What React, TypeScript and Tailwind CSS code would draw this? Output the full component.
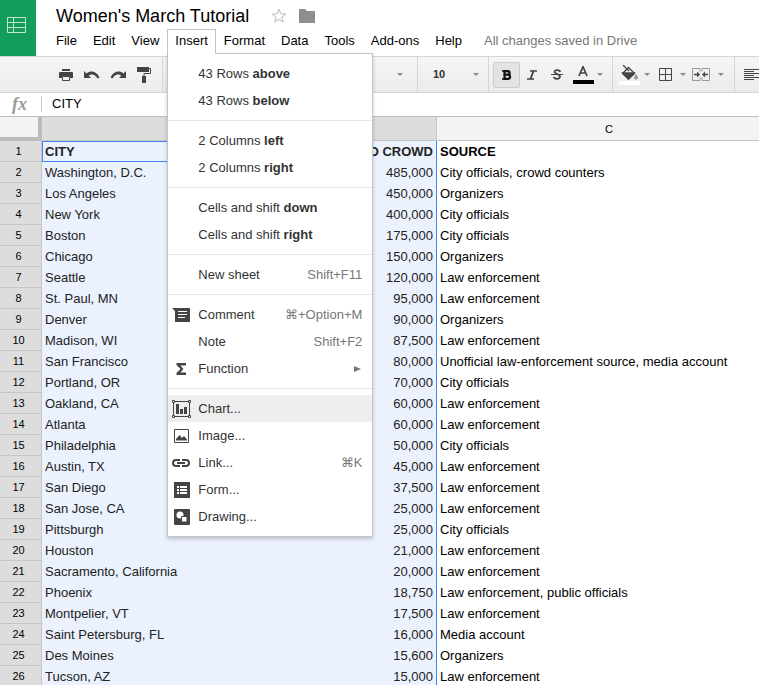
import type { ReactNode } from "react";

type Row = [string, string, string];

const rows: Row[] = [
  ["Washington, D.C.", "485,000", "City officials, crowd counters"],
  ["Los Angeles", "450,000", "Organizers"],
  ["New York", "400,000", "City officials"],
  ["Boston", "175,000", "City officials"],
  ["Chicago", "150,000", "Organizers"],
  ["Seattle", "120,000", "Law enforcement"],
  ["St. Paul, MN", "95,000", "Law enforcement"],
  ["Denver", "90,000", "Organizers"],
  ["Madison, WI", "87,500", "Law enforcement"],
  ["San Francisco", "80,000", "Unofficial law-enforcement source, media account"],
  ["Portland, OR", "70,000", "City officials"],
  ["Oakland, CA", "60,000", "Law enforcement"],
  ["Atlanta", "60,000", "Law enforcement"],
  ["Philadelphia", "50,000", "City officials"],
  ["Austin, TX", "45,000", "Law enforcement"],
  ["San Diego", "37,500", "Law enforcement"],
  ["San Jose, CA", "25,000", "Law enforcement"],
  ["Pittsburgh", "25,000", "City officials"],
  ["Houston", "21,000", "Law enforcement"],
  ["Sacramento, California", "20,000", "Law enforcement"],
  ["Phoenix", "18,750", "Law enforcement, public officials"],
  ["Montpelier, VT", "17,500", "Law enforcement"],
  ["Saint Petersburg, FL", "16,000", "Media account"],
  ["Des Moines", "15,600", "Organizers"],
  ["Tucson, AZ", "15,000", "Law enforcement"],
];

function Arrow() {
  return (
    <svg width="6" height="3" viewBox="0 0 6 3" className="shrink-0" aria-hidden="true">
      <path d="M0 0h6L3 3z" fill="#8a8a8a" />
    </svg>
  );
}

function Tool({ label, className = "w-[26px]", children }: { label: string; className?: string; children: ReactNode }) {
  return (
    <button type="button" aria-label={label} className={`flex h-[26px] shrink-0 items-center justify-center ${className}`}>
      {children}
    </button>
  );
}

function MenuItem({ label, strong, shortcut, icon, active = false, submenu = false }: {
  label: string;
  strong?: string;
  shortcut?: string;
  icon?: ReactNode;
  active?: boolean;
  submenu?: boolean;
}) {
  return (
    <button
      type="button"
      role="menuitem"
      className={`flex h-[27px] w-full items-center pr-[10px] text-left text-[#333] ${active ? "bg-[#eee]" : ""}`}
    >
      <span className="flex w-[30px] shrink-0 justify-start pl-1">{icon}</span>
      <span className="grow whitespace-nowrap">
        {label}
        {strong && <b> {strong}</b>}
      </span>
      {shortcut && <span className="whitespace-nowrap text-[#777]">{shortcut}</span>}
      {submenu && (
        <svg width="8" height="8" viewBox="0 0 8 8" aria-hidden="true">
          <path d="M0 1l7 3-7 3z" fill="#777" />
        </svg>
      )}
    </button>
  );
}

function Separator() {
  return <hr className="my-[6px] border-t border-[#e5e5e5]" />;
}

const commentIcon = (
  <svg width="20" height="16" viewBox="0 0 20 16" aria-hidden="true">
    <path d="M0 1h18v14H3V4z" fill="#444" />
    <path d="M6 4.500h9M6 7.500h9M6 10.500h7" stroke="#fff" />
  </svg>
);
const sigmaIcon = (
  <svg width="20" height="14" viewBox="0 0 20 14" aria-hidden="true">
    <path d="M4.500 1H14v2.500H8.400L11.500 7l-3.100 3.500H14V13H4.500v-2l4-4-4-4z" fill="#444" />
  </svg>
);
const chartIcon = (
  <svg width="20" height="18" viewBox="0 0 20 18" aria-hidden="true">
    <path d="M2.500 1.500h14M2.500 16.500h14M1.500 2v14M17.500 2v14" stroke="#444" />
    <path d="M.5.5h2v2h-2zM16.500.5h2v2h-2zM.5 15.500h2v2h-2zM16.500 15.500h2v2h-2z" fill="#eee" stroke="#444" />
    <path d="M4 4h3v10H4zM8 9h3v5H8zM12 7h3v7h-3z" fill="#444" />
  </svg>
);
const imageIcon = (
  <svg width="20" height="14" viewBox="0 0 20 14" aria-hidden="true">
    <path d="M2.500.5h14v13h-14z" fill="none" stroke="#444" />
    <path d="M4 11.500V10l3.500-4 2.500 3 2-2 3 3.500v1z" fill="#444" />
  </svg>
);
const linkIcon = (
  <svg width="20" height="8" viewBox="0 0 20 8" aria-hidden="true">
    <path d="M8 1H4a3 3 0 0 0 0 6h4M10 1h4a3 3 0 0 1 0 6h-4M5 4h8" fill="none" stroke="#444" strokeWidth="2" />
  </svg>
);
const formIcon = (
  <svg width="20" height="16" viewBox="0 0 20 16" aria-hidden="true">
    <path d="M2 0h16v16H2z" fill="#444" />
    <path d="M5 5h2M8 5h7M5 8h2M8 8h7M5 11h2M8 11h7" stroke="#fff" strokeWidth="2" />
  </svg>
);
const drawingIcon = (
  <svg width="20" height="16" viewBox="0 0 20 16" aria-hidden="true">
    <rect x="2" width="16" height="16" rx="1" fill="#444" />
    <circle cx="8" cy="6" r="3.500" fill="#fff" />
    <path d="M9.500 7.500H15V13H9.500z" fill="#fff" stroke="#444" />
  </svg>
);

function InsertMenu() {
  return (
    <div role="menu" className="absolute top-[24px] left-0 z-10 w-[206px] border border-[#c4c4c4] bg-white py-[6px] shadow-[0_2px_4px_rgba(0,0,0,0.2)]">
      <MenuItem label="43 Rows" strong="above" />
      <MenuItem label="43 Rows" strong="below" />
      <Separator />
      <MenuItem label="2 Columns" strong="left" />
      <MenuItem label="2 Columns" strong="right" />
      <Separator />
      <MenuItem label="Cells and shift" strong="down" />
      <MenuItem label="Cells and shift" strong="right" />
      <Separator />
      <MenuItem label="New sheet" shortcut="Shift+F11" />
      <Separator />
      <MenuItem label="Comment" shortcut="⌘+Option+M" icon={commentIcon} />
      <MenuItem label="Note" shortcut="Shift+F2" />
      <MenuItem label="Function" icon={sigmaIcon} submenu />
      <Separator />
      <MenuItem label="Chart..." icon={chartIcon} active />
      <MenuItem label="Image..." icon={imageIcon} />
      <MenuItem label="Link..." shortcut="⌘K" icon={linkIcon} />
      <MenuItem label="Form..." icon={formIcon} />
      <MenuItem label="Drawing..." icon={drawingIcon} />
    </div>
  );
}

function Header() {
  return (
    <header className="flex h-14">
      <a href="#home" aria-label="Sheets home" className="flex w-9 shrink-0 justify-center bg-[#129e5a] pt-[17px] pr-[3px]">
        <svg width="19" height="16" viewBox="0 0 19 16" aria-hidden="true">
          <path d="M.5.5h18v15H.5zM.5 5.500h18M.5 10.500h18M6.500.5v15" fill="none" stroke="#c4e7d5" />
        </svg>
      </a>
      <div className="flex min-w-0 grow flex-col pl-3">
        <div className="flex h-[29px] items-center pt-[3px] pl-2">
          <h1 className="whitespace-nowrap text-[18px] leading-6">Women's March Tutorial</h1>
          <button type="button" aria-label="Star" className="ml-[22px]">
            <svg width="16" height="16" viewBox="0 0 16 16" aria-hidden="true">
              <path d="M8 1.200l1.800 4.600 5 .3-3.900 3.100 1.300 4.900L8 11.400l-4.200 2.700 1.300-4.900L1.200 6.100l5-.3z" fill="none" stroke="#bbb" />
            </svg>
          </button>
          <button type="button" aria-label="Move to folder" className="ml-3">
            <svg width="16" height="14" viewBox="0 0 16 14" aria-hidden="true">
              <path d="M0 0h6l2 2h8v12H0z" fill="#8e8e8e" />
            </svg>
          </button>
        </div>
        <nav className="flex h-[27px] whitespace-nowrap leading-6">
          <button type="button" className="h-6 px-2">File</button>
          <button type="button" className="h-6 px-2">Edit</button>
          <button type="button" className="h-6 px-2">View</button>
          <div className="relative">
            <button type="button" aria-expanded="true" className="relative z-20 flex h-[25px] items-start border border-b-0 border-[#c4c4c4] bg-white px-[7px] leading-[22px]">
              Insert
            </button>
            <InsertMenu />
          </div>
          <button type="button" className="h-6 px-2">Format</button>
          <button type="button" className="h-6 px-2">Data</button>
          <button type="button" className="h-6 px-2">Tools</button>
          <button type="button" className="h-6 px-2">Add-ons</button>
          <button type="button" className="h-6 px-2">Help</button>
          <span className="ml-[14px] text-[#777]">All changes saved in Drive</span>
        </nav>
      </div>
    </header>
  );
}

function Toolbar() {
  return (
    <div role="toolbar" className="flex h-[37px] items-stretch overflow-hidden border-y border-[#d5d5d5] bg-linear-to-b from-[#f6f6f6] to-[#ebebeb] text-[#444]">
      <div className="flex w-[163px] shrink-0 items-center border-r border-[#d5d5d5] pl-[53px]">
        <Tool label="Print">
          <svg width="14" height="12" viewBox="0 0 14 12" aria-hidden="true">
            <path d="M3 0h8v2H3zM1 3h12a1 1 0 0 1 1 1v5h-3V7H3v2H0V4a1 1 0 0 1 1-1z" fill="#444" />
            <path d="M3.500 7.500h7v4h-7z" fill="#f1f1f1" stroke="#444" />
          </svg>
        </Tool>
        <Tool label="Undo">
          <svg width="16" height="10" viewBox="0 0 16 10" aria-hidden="true">
            <path d="M0 1v7h7L4.800 5.800C7 3.800 11 3.600 13.500 8.500l2-1C12.500 1 6.500.2 2.500 3.500z" fill="#444" />
          </svg>
        </Tool>
        <Tool label="Redo">
          <svg width="16" height="10" viewBox="0 0 16 10" aria-hidden="true">
            <path d="M16 1v7H9l2.200-2.200C9 3.800 5 3.600 2.500 8.500l-2-1C3.500 1 9.500.2 13.500 3.500z" fill="#444" />
          </svg>
        </Tool>
        <Tool label="Paint format">
          <svg width="14" height="16" viewBox="0 0 14 16" aria-hidden="true">
            <path d="M0 0h12v5H0zM5 9h4v7H5z" fill="#444" />
            <path d="M12 1.500h1.500v5H7V10" fill="none" stroke="#444" />
          </svg>
        </Tool>
      </div>
      <div className="flex w-[255px] shrink-0 items-center justify-end border-r border-[#d5d5d5] pr-1">
        <Tool label="Font">
          <Arrow />
        </Tool>
      </div>
      <label className="flex w-[71px] shrink-0 items-center border-r border-[#d5d5d5] pr-[9px] pl-[15px]">
        <select aria-label="Font size" defaultValue="10" className="grow appearance-none bg-transparent text-[11px] font-bold text-[#333]">
          <option>10</option>
        </select>
        <Arrow />
      </label>
      <div className="flex w-[124px] shrink-0 items-center border-r border-[#d5d5d5] pl-1">
        <Tool label="Bold" className="w-[27px] rounded-xs border border-[#ccc] bg-[#e3e3e3]">
          <svg width="10" height="10" viewBox="0 0 10 10" aria-hidden="true">
            <path d="M0 1h6M0 9h6" stroke="#111" strokeWidth="1.500" />
            <path d="M2.500 1.200h3.300a1.700 1.700 0 0 1 0 3.500H3h3a2 2 0 0 1 0 4.100H2.500z" fill="none" stroke="#111" strokeWidth="2.200" />
          </svg>
        </Tool>
        <Tool label="Italic" className="w-6">
          <svg width="10" height="10" viewBox="0 0 10 10" aria-hidden="true">
            <path d="M3 1h7M0 9h7" stroke="#444" strokeWidth="1.500" />
            <path d="M6.500 1l-3 8" stroke="#444" strokeWidth="2" />
          </svg>
        </Tool>
        <Tool label="Strikethrough">
          <svg width="12" height="11" viewBox="0 0 12 11" aria-hidden="true">
            <path d="M9 3C9 .6 3.500.4 3.500 3c0 1.600 5.500 2.200 5.500 4.800 0 2.700-6 2.700-6-.1" fill="none" stroke="#444" strokeWidth="1.800" />
            <path d="M0 5.500h12" stroke="#444" />
          </svg>
        </Tool>
        <Tool label="Text color" className="w-[34px] gap-[3px] pl-[2px]">
          <svg width="21" height="18" viewBox="0 0 21 18" className="shrink-0" aria-hidden="true">
            <path d="M6 10l4-9.300L14 10M7.200 7h5.600" fill="none" stroke="#444" strokeWidth="1.700" />
            <path d="M0 14h21v4H0z" fill="#000" />
          </svg>
          <Arrow />
        </Tool>
      </div>
      <div className="flex w-[122px] shrink-0 items-center border-r border-[#d5d5d5] pl-[5px]">
        <Tool label="Fill color" className="w-[33px] gap-1">
          <svg width="21" height="20" viewBox="0 0 21 20" className="shrink-0" aria-hidden="true">
            <path d="M9.500 2.500l6 6-6 5.500-6-5.500z" fill="none" stroke="#444" strokeWidth="1.300" />
            <path d="M4 8h11l-5.500 6z" fill="#444" stroke="#444" strokeWidth="1.500" />
            <path d="M4 0l6 6" stroke="#444" strokeWidth="1.300" />
            <path d="M17 9c3 4 2 5.500 0 5.500S14 13 17 9z" fill="#999" />
            <path d="M0 16h21v4H0z" fill="#fff" />
          </svg>
          <Arrow />
        </Tool>
        <Tool label="Borders" className="ml-2 w-[27px] gap-2">
          <svg width="13" height="13" viewBox="0 0 13 13" aria-hidden="true">
            <path d="M.5.5h12v12H.5zM6.500.5v12M.5 6.500h12" fill="none" stroke="#444" />
          </svg>
          <Arrow />
        </Tool>
        <Tool label="Merge cells" className="ml-[6px] w-8 gap-2">
          <svg width="18" height="13" viewBox="0 0 18 13" aria-hidden="true">
            <path d="M8 3.500V.5H.5v12H8v-3M10 3.500V.5h7.500v12H10v-3" fill="none" stroke="#999" />
            <path d="M2 6.500h4M16 6.500h-4" stroke="#444" strokeWidth="1.500" />
            <path d="M5 3.500l3 3-3 3zM13 3.500l-3 3 3 3z" fill="#444" />
          </svg>
          <Arrow />
        </Tool>
      </div>
      <div className="flex shrink-0 items-center pl-[9px]">
        <Tool label="Align left" className="w-4">
          <svg width="16" height="11" viewBox="0 0 16 11" aria-hidden="true">
            <path d="M0 .5h16M0 2.500h10M0 4.500h16M0 6.500h10M0 8.500h16M0 10.500h10" stroke="#444" />
          </svg>
        </Tool>
      </div>
    </div>
  );
}

function FormulaBar() {
  return (
    <label className="flex h-6 items-center border-b border-[#bdbdbd] pb-[2px]">
      <span className="flex h-4 w-[42px] shrink-0 items-center border-r border-[#ccc] pl-3 font-['Liberation_Serif',serif] text-[18px] leading-4 font-bold text-[#999] italic">fx</span>
      <input aria-label="Formula" defaultValue="CITY" className="h-5 min-w-0 grow bg-transparent pl-[10px] outline-none" />
    </label>
  );
}

function RowNumber({ n }: { n: number }) {
  return (
    <th scope="row" className="h-[21px] border-r border-b border-[#c6c6c6] bg-[#ddd] p-0 pr-1 text-center text-[11px] font-normal">
      {n}
    </th>
  );
}

function Sheet() {
  return (
    <table className="w-full table-fixed border-separate border-spacing-0 leading-5">
      <colgroup>
        <col className="w-[42px]" />
        <col className="w-[260px]" />
        <col className="w-[135px]" />
        <col />
      </colgroup>
      <thead>
        <tr className="h-6 text-[11px]">
          <td className="border-r-4 border-b-4 border-[#bcbcbc] bg-[#f3f3f3] p-0" />
          <th scope="col" className="border-r border-b border-[#c6c6c6] bg-[#ddd] p-0 font-normal">A</th>
          <th scope="col" className="border-r border-b border-[#c6c6c6] bg-[#ddd] p-0 font-normal">B</th>
          <th scope="col" className="border-b border-[#c6c6c6] bg-[#f3f3f3] p-0 pr-[22px] pl-11 font-normal">C</th>
        </tr>
      </thead>
      <tbody>
        <tr className="font-bold">
          <RowNumber n={1} />
          <td className="h-[21px] border border-[#4285f4] bg-[#ebf2fe] p-0 pl-[2px] leading-[19px] text-[#222]">CITY</td>
          <td className="h-[21px] overflow-hidden border-r border-[#4285f4] bg-[#ebf2fe] p-0 pr-[3px] text-right whitespace-nowrap text-[#222]">ESTIMATED CROWD</td>
          <td className="h-[21px] p-0 pl-[3px]">SOURCE</td>
        </tr>
        {rows.map(([city, crowd, source], i) => (
          <tr key={city}>
            <RowNumber n={i + 2} />
            <td className="h-[21px] bg-[#ebf2fe] p-0 pl-[3px] whitespace-nowrap text-[#222]">{city}</td>
            <td className="h-[21px] border-r border-[#4285f4] bg-[#ebf2fe] p-0 pr-[3px] text-right text-[#222]">{crowd}</td>
            <td className="h-[21px] p-0 pl-[3px] whitespace-nowrap">{source}</td>
          </tr>
        ))}
      </tbody>
    </table>
  );
}

export default function App() {
  return (
    <div className="h-screen overflow-hidden bg-white font-['Liberation_Sans',Arial,sans-serif] text-[13px] text-black">
      <Header />
      <Toolbar />
      <FormulaBar />
      <Sheet />
    </div>
  );
}
